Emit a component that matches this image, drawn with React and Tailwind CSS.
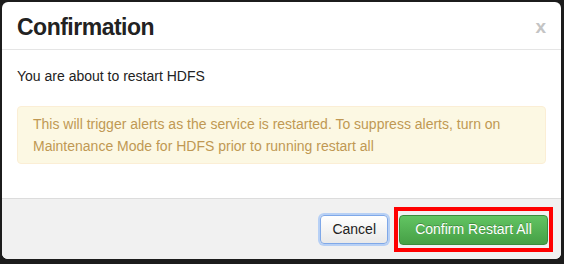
import React from 'react';

const App = () => {
    return (
        <div className="w-[564px] h-[264px] bg-[#1c1c1c] pt-[2px] pl-[2px] overflow-hidden" style={{ fontFamily: '"Liberation Sans", Arial, sans-serif' }}>
            <div className="w-[559px] h-[257px] bg-white rounded-[6px] overflow-hidden flex flex-col">
                <div className="h-[48px] flex items-center justify-between pl-[15px] pr-[15px] pt-[3px] border-b border-[#e5e5e5] shrink-0">
                    <h1 className="text-[23px] font-bold text-[#222] tracking-[-0.5px]">Confirmation</h1>
                    <span className="text-[19px] font-bold text-[#c4c4c4] leading-none -mt-[2px]">x</span>
                </div>

                <div className="flex-1 px-[15px] pt-[16px]">
                    <p className="text-[14px] text-[#222] leading-[20px]">You are about to restart HDFS</p>
                    <div className="mt-[20px] bg-[#fcf8e3] border border-[#fbeed5] rounded-[4px] px-[15px] py-[6px] text-[14px] leading-[22px] text-[#c09853]">
                        This will trigger alerts as the service is restarted. To suppress alerts, turn on Maintenance Mode for HDFS prior to running restart all
                    </div>
                </div>

                <div className="h-[61px] shrink-0 bg-[#f1f1f1] border-t border-[#dcdcdc] flex items-center justify-end pr-[8px] gap-[6px]">
                    <button className="h-[29px] px-[11px] text-[14px] text-[#222] rounded-[4px] border border-[#7fa8e8] bg-gradient-to-b from-white to-[#e9e9e9] shadow-[0_0_0_2px_#b7d0f5]">
                        Cancel
                    </button>
                    <div className="border-4 border-[#f00] px-[1px] pt-[4px] pb-[3px]">
                        <button className="w-[149px] h-[30px] text-[14px] text-white rounded-[4px] border border-[#3c8a3c] bg-gradient-to-b from-[#62c462] to-[#46a046] [text-shadow:0_-1px_0_rgba(0,0,0,0.25)]">
                            Confirm Restart All
                        </button>
                    </div>
                </div>
            </div>
        </div>
    );
};

export default App;
